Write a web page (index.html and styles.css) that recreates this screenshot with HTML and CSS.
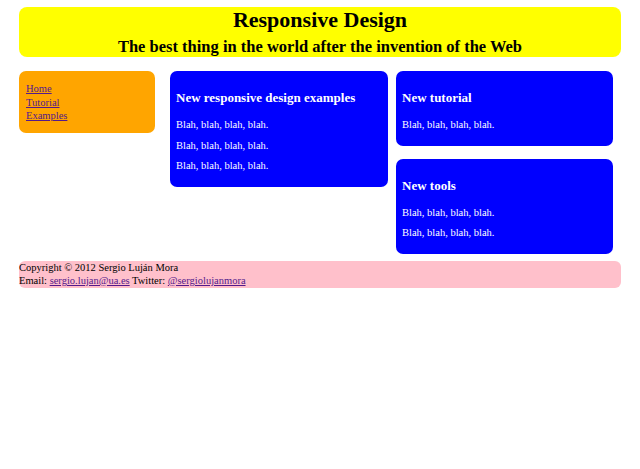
FILE: index.html
```html
<!DOCTYPE html>
<html lang="en">
<head>
<meta charset="utf-8">
<title>Responsive Design</title>
<link rel="stylesheet" href="styles.css">
</head>
<body>
<div class="page">
  <header class="masthead">
    <h1 class="title">Responsive Design</h1>
    <h2 class="subtitle">The best thing in the world after the invention of the Web</h2>
  </header>
  <div class="main">
    <nav class="menu">
      <ul class="menu-list">
        <li><a class="link" href="#">Home</a></li>
        <li><a class="link" href="#">Tutorial</a></li>
        <li><a class="link" href="#">Examples</a></li>
      </ul>
    </nav>
    <section class="box box-wide">
      <h3 class="box-title">New responsive design examples</h3>
      <p class="box-text">Blah, blah, blah, blah.</p>
      <p class="box-text">Blah, blah, blah, blah.</p>
      <p class="box-text">Blah, blah, blah, blah.</p>
    </section>
    <div class="side">
      <section class="box">
        <h3 class="box-title">New tutorial</h3>
        <p class="box-text">Blah, blah, blah, blah.</p>
      </section>
      <section class="box">
        <h3 class="box-title">New tools</h3>
        <p class="box-text">Blah, blah, blah, blah.</p>
        <p class="box-text">Blah, blah, blah, blah.</p>
      </section>
    </div>
  </div>
  <footer class="foot">
    <div class="foot-line">Copyright © 2012 Sergio Luján Mora</div>
    <div class="foot-line">Email: <a class="link" href="#">sergio.lujan@ua.es</a> Twitter: <a class="link" href="#">@sergiolujanmora</a></div>
  </footer>
</div>
</body>
</html>
```
FILE: styles.css
```css
html, body {
  margin: 0;
  padding: 0;
  background: #ffffff;
}

body {
  font-family: "Liberation Serif", "Times New Roman", serif;
  font-size: 10.5px;
  color: #000000;
}

.page {
  padding: 7px 19px;
}

.masthead {
  background: #ffff00;
  border-radius: 8px;
  text-align: center;
  height: 50px;
}

.title {
  margin: 0;
  font-size: 22px;
  line-height: 25px;
  font-weight: bold;
}

.subtitle {
  margin: 5px 0 0;
  font-size: 16.5px;
  line-height: 19px;
  font-weight: bold;
}

.main {
  display: flex;
  align-items: flex-start;
  margin-top: 14px;
}

.menu {
  width: 136px;
  margin-right: 15px;
  background: #ffa500;
  border-radius: 7px;
  padding: 11px 7px 10px;
  box-sizing: border-box;
}

.menu-list {
  list-style: none;
  margin: 0;
  padding: 0;
  line-height: 13.5px;
}

.link {
  color: #551a8b;
  text-decoration: underline;
}

.box {
  background: #0000ff;
  color: #ffffff;
  border-radius: 7px;
  padding: 6px 6px 6px;
  box-sizing: border-box;
}

.box-wide {
  width: 218px;
  margin-right: 8px;
}

.side {
  width: 217px;
  display: flex;
  flex-direction: column;
  gap: 13px;
}

.box-title {
  margin: 13px 0 14px;
  font-size: 13px;
  line-height: 15px;
  font-weight: bold;
}

.box-text {
  margin: 8.5px 0;
  line-height: 12px;
}

.foot {
  margin-top: 7px;
  background: #ffc0cb;
  border-radius: 6px;
  line-height: 13.5px;
}
```
